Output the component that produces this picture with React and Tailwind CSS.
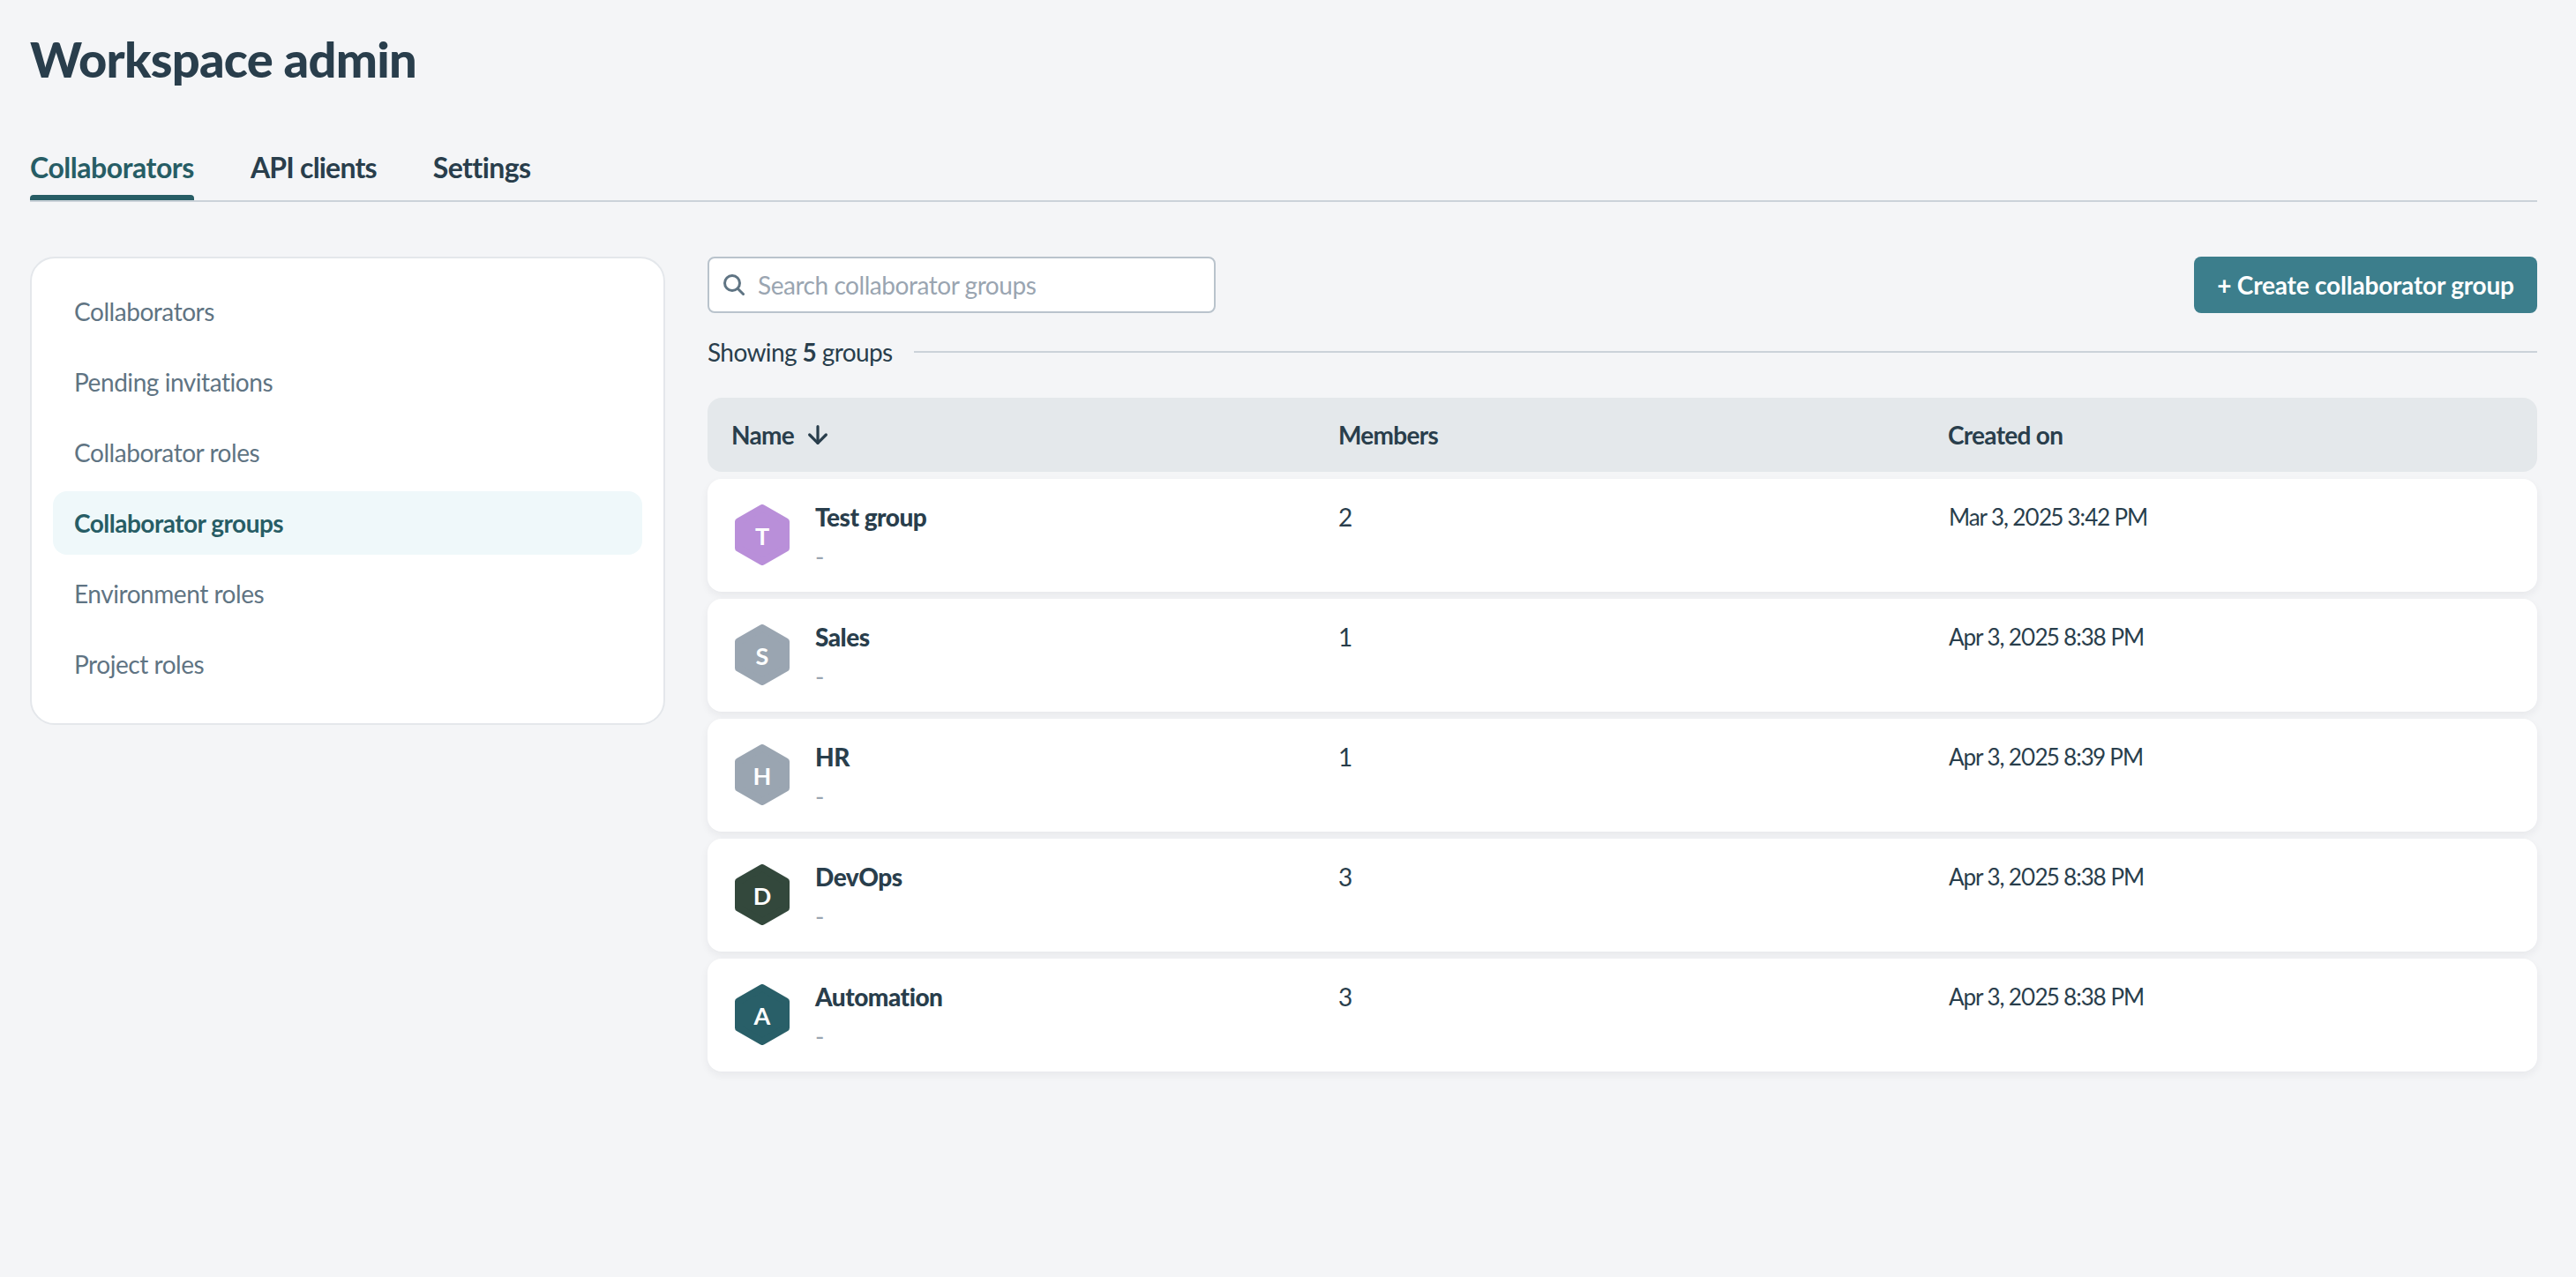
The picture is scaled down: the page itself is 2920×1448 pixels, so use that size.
import React from "react";
import { ArrowDown } from "lucide-react";

const font = { fontFamily: '"Lato", "Noto Sans", sans-serif' };

function Hex({ color, letter }) {
  return (
    <div className="relative w-[62px] h-[69px] shrink-0 flex items-center justify-center">
      <svg className="absolute inset-0" width="62" height="69" viewBox="0 0 62 69">
        <polygon points="31,4 58,19.5 58,49.5 31,65 4,49.5 4,19.5" fill={color} stroke={color} strokeWidth="8" strokeLinejoin="round" />
      </svg>
      <span className="relative pt-[2px] text-[27px] leading-[32px] font-bold text-white">{letter}</span>
    </div>
  );
}

const groups = [
  ["Test group", "2", "Mar 3, 2025 3:42 PM", "#b98fd9", "T"],
  ["Sales", "1", "Apr 3, 2025 8:38 PM", "#9aa5b1", "S"],
  ["HR", "1", "Apr 3, 2025 8:39 PM", "#9aa5b1", "H"],
  ["DevOps", "3", "Apr 3, 2025 8:38 PM", "#33483c", "D"],
  ["Automation", "3", "Apr 3, 2025 8:38 PM", "#295f68", "A"],
];

const nav = ["Collaborators", "Pending invitations", "Collaborator roles", "Collaborator groups", "Environment roles", "Project roles"];

const tabs = [
  ["Collaborators", "text-[#275d65] tracking-[-0.45px]", "bg-[#275d65]"],
  ["API clients", "tracking-[-0.8px]", ""],
  ["Settings", "tracking-[-0.6px]", ""],
];

export default function App() {
  return (
    <div className="min-h-[1448px] bg-[#f4f5f7] pl-[34px] pr-[44px] pt-[33px] text-[#293e4c] overflow-hidden" style={font}>
      <h1 className="text-[56px] leading-[68px] font-black tracking-[-0.75px]">Workspace admin</h1>
      <div className="mt-[69px] flex gap-[64px] border-b-2 border-[#cbd2d9]">
        {tabs.map(([t, cls, bar]) => (
          <div key={t} className="flex flex-col">
            <span className={`text-[32px] leading-[40px] font-bold ${cls}`}>{t}</span>
            <div className={`mt-[11px] h-[6px] rounded-t-[4px] ${bar}`} />
          </div>
        ))}
      </div>
      <div className="mt-[62px] flex gap-[48px] items-start">
        <div className="w-[720px] shrink-0 bg-white border-2 border-[#e4e7eb] rounded-[28px] pt-6 pb-[31px] px-6 flex flex-col gap-2">
          {nav.map((n) => (
            <div
              key={n}
              className={`h-[72px] flex items-center px-6 rounded-[16px] text-[28px] ${n === "Collaborator groups" ? "bg-[#eff8fa] text-[#275d65] font-bold tracking-[-0.5px]" : "text-[#5f7483] tracking-[-0.45px]"}`}
            >
              {n}
            </div>
          ))}
        </div>
        <div className="flex-1 min-w-0">
          <div className="flex justify-between h-[64px]">
            <div className="w-[576px] bg-white border-2 border-[#b9c3cc] rounded-[8px] flex items-center pl-4 gap-[15px]">
              <svg width="24" height="24" viewBox="0 0 24 24" fill="none" stroke="#5f7483" strokeWidth="3" strokeLinecap="round">
                <circle cx="10" cy="10" r="8.5" />
                <path d="M16.5 16.5 22.5 22.5" />
              </svg>
              <span className="text-[28px] tracking-[-0.45px] text-[#9aa5b1]">Search collaborator groups</span>
            </div>
            <div className="w-[389px] bg-[#3c7e8c] rounded-[8px] flex items-center justify-center text-[28px] font-bold text-white tracking-[-0.2px]">
              + Create collaborator group
            </div>
          </div>
          <div className="mt-5 h-12 flex items-center gap-6">
            <span className="text-[28px] tracking-[-0.6px]">Showing <b className="font-bold">5</b> groups</span>
            <div className="flex-1 h-[2px] bg-[#cbd2d9]" />
          </div>
          <div className="mt-7 h-[84px] bg-[#e4e8eb] rounded-[16px] grid grid-cols-[715px_691px_1fr] items-center text-[28px] font-bold tracking-[-0.7px]">
            <div className="pl-[27px] flex items-center gap-[11px]">
              Name <ArrowDown size={32} strokeWidth={2.4} />
            </div>
            <div>Members</div>
            <div>Created on</div>
          </div>
          <div className="mt-2 flex flex-col gap-2">
            {groups.map(([name, members, date, color, letter]) => (
              <div key={name} className="h-[128px] bg-white rounded-[16px] shadow-[0_4px_10px_rgba(31,41,51,0.06)] grid grid-cols-[715px_691px_1fr] text-[28px]">
                <div className="pl-[31px] pt-[29px] flex gap-[29px]">
                  <Hex color={color} letter={letter} />
                  <div className="-mt-[4px]">
                    <div className="leading-[36px] font-black tracking-[-0.5px]">{name}</div>
                    <div className="mt-[9px] leading-[36px] text-[#9aa5b1]">-</div>
                  </div>
                </div>
                <div className="pt-[25px] leading-[36px]">{members}</div>
                <div className="pt-[25px] pl-[1px] leading-[36px] text-[26px] tracking-[-1.05px] proportional-nums">{date}</div>
              </div>
            ))}
          </div>
        </div>
      </div>
    </div>
  );
}
